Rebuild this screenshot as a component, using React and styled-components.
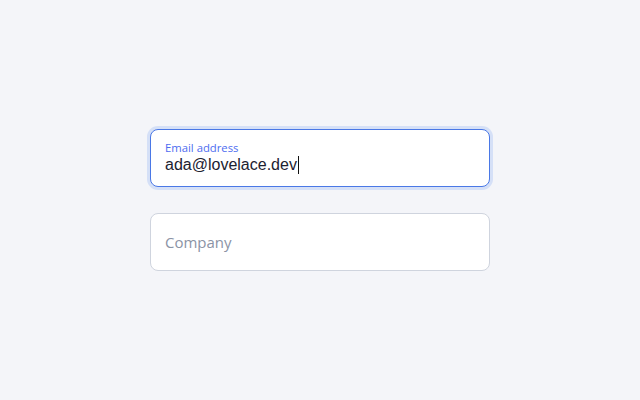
import styled, { createGlobalStyle } from 'styled-components';

const GlobalStyle = createGlobalStyle`
  html, body {
    margin: 0;
    padding: 0;
    background: #f4f5f9;
  }
`;

export default function App() {
  return (
    <>
      <GlobalStyle />
      <Page>
        <Form>
          <Field $focused>
            <Label>Email address</Label>
            <Value>
              ada@lovelace.dev
              <Caret />
            </Value>
          </Field>
          <Field>
            <Placeholder>Company</Placeholder>
          </Field>
        </Form>
      </Page>
    </>
  );
}

const Page = styled.main`
  width: 640px;
  height: 400px;
  display: flex;
  align-items: center;
  justify-content: center;
`;

const Form = styled.div`
  display: flex;
  flex-direction: column;
  gap: 26px;
  width: 340px;
`;

const Field = styled.div`
  box-sizing: border-box;
  height: 58px;
  padding: 0 14px;
  background: #ffffff;
  border: 1px solid ${(p) => (p.$focused ? '#4a78e6' : '#cfd4de')};
  border-radius: 8px;
  box-shadow: ${(p) => (p.$focused ? '0 0 0 3px #d5e0f7' : 'none')};
  display: flex;
  flex-direction: column;
  justify-content: center;
`;

const Label = styled.span`
  font-family: 'Open Sans', sans-serif;
  font-size: 11.3px;
  line-height: 14px;
  color: #4d6cf0;
`;

const Value = styled.span`
  display: flex;
  align-items: center;
  font-family: 'Liberation Sans', Arial, sans-serif;
  font-size: 16px;
  line-height: 20px;
  color: #1c2230;
`;

const Caret = styled.span`
  display: inline-block;
  width: 1px;
  height: 18px;
  margin-left: 1px;
  background: #111;
`;

const Placeholder = styled.span`
  font-family: 'Open Sans', sans-serif;
  font-size: 15px;
  color: #8b93a5;
`;
